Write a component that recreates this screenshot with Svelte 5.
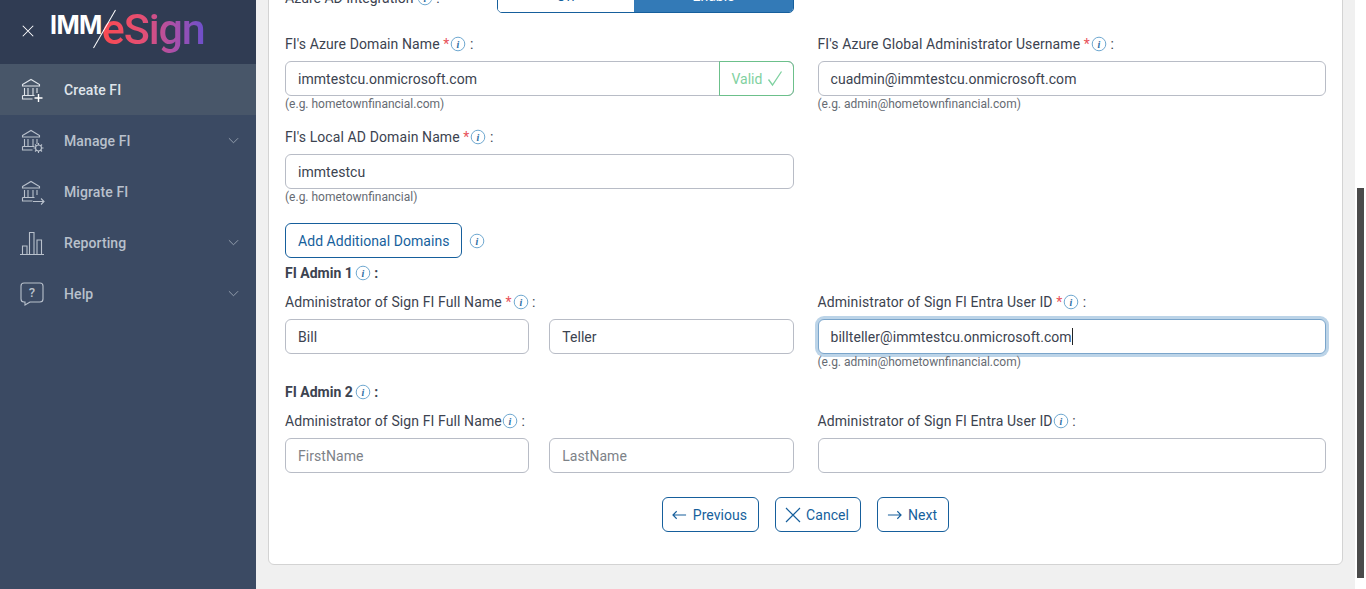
<script lang="ts">
  const nav = [
    { label: 'Create FI', icon: 'plus', active: true },
    { label: 'Manage FI', icon: 'gear', caret: true },
    { label: 'Migrate FI', icon: 'arrow' },
    { label: 'Reporting', icon: 'bars', caret: true },
    { label: 'Help', icon: 'help', caret: true }
  ];
</script>

{#snippet info()}
  <svg class="info" viewBox="0 0 16 16" aria-hidden="true">
    <circle cx="8" cy="8" r="6.8" fill="none" stroke="#6fa8d0" stroke-width="1" />
    <text x="8" y="11.5" text-anchor="middle" class="info-i">i</text>
  </svg>
{/snippet}

{#snippet bank()}
  <path d="M3.500 7.500 12 2.500l8.500 5v1.500h-17zM5.500 11v7M9 11v7M14 11v7M18 11v5M3.500 18.500h12M3.500 18.500v3.500h10" />
{/snippet}

<div class="layout">
  <aside class="sidebar">
    <header class="brand">
      <svg class="close" viewBox="0 0 16 16" aria-hidden="true">
        <path d="M2 2l12 12M14 2 2 14" />
      </svg>
      <div class="logo">
        <span class="imm">IMM</span>
        <span class="slash"></span>
        <span class="esign">eSign</span>
      </div>
    </header>
    <nav>
      {#each nav as item}
        <div class="nav-item" class:active={item.active}>
          <svg class="nav-icon" viewBox="0 0 26 26" aria-hidden="true">
            {#if item.icon === 'bars'}
              <path d="M1 24.500h24M3.500 24v-8h4.500v8M10.500 24V2.500h4.500V24M18 24V10h4.500v14" />
            {:else if item.icon === 'help'}
              <path d="M5 2h16a3 3 0 0 1 3 3v13a3 3 0 0 1-3 3H11l-5 3v-3H5a3 3 0 0 1-3-3V5a3 3 0 0 1 3-3z" />
              <text x="13" y="16" text-anchor="middle" class="help-mark">?</text>
            {:else}
              {@render bank()}
              {#if item.icon === 'plus'}
                <path class="strong" d="M19.500 17v8M15.500 21h8" />
              {:else if item.icon === 'gear'}
                <circle cx="19.500" cy="20" r="3" />
                <path d="M19.500 15v2M19.500 23v2M14.500 20h2M22.500 20h2M16 16.500l1.500 1.500M21.500 22l1.500 1.500M23 16.500 21.500 18M17.500 22 16 23.500" />
              {:else}
                <path d="M14 22.500h11M22 19.500l3 3-3 3" />
              {/if}
            {/if}
          </svg>
          <span class="nav-label">{item.label}</span>
          {#if item.caret}
            <svg class="caret" viewBox="0 0 12 7" aria-hidden="true"><path d="M1 1l5 5 5-5" /></svg>
          {/if}
        </div>
      {/each}
    </nav>
  </aside>

  <main class="main">
    <section class="card">
      <div class="toggle-row">
        <span class="label toggle-label">Azure AD Integration {@render info()} :</span>
        <div class="toggle">
          <span class="off">Off</span>
          <span class="on">Enable</span>
        </div>
      </div>

      <div class="grid first">
        <div class="field">
          <span class="label">FI's Azure Domain Name <b class="req">*</b>{@render info()} :</span>
          <div class="group">
            <span class="group-value">immtestcu.onmicrosoft.com</span>
            <span class="valid">Valid
              <svg viewBox="0 0 16 16" aria-hidden="true"><path d="M1.500 9l4 5.500L14.500 1" /></svg>
            </span>
          </div>
          <small>(e.g. hometownfinancial.com)</small>
        </div>
        <div class="field">
          <span class="label">FI's Azure Global Administrator Username <b class="req">*</b>{@render info()} :</span>
          <div class="input">cuadmin@immtestcu.onmicrosoft.com</div>
          <small>(e.g. admin@hometownfinancial.com)</small>
        </div>
        <div class="field second">
          <span class="label">FI's Local AD Domain Name <b class="req">*</b>{@render info()} :</span>
          <div class="input">immtestcu</div>
          <small>(e.g. hometownfinancial)</small>
        </div>
      </div>

      <div class="add-row">
        <button class="btn add">Add Additional Domains</button>
        {@render info()}
      </div>

      <div class="admin-title">FI Admin 1{@render info()} :</div>
      <div class="grid">
        <div class="field">
          <span class="label">Administrator of Sign FI Full Name <b class="req">*</b>{@render info()} :</span>
          <div class="names">
            <div class="input">Bill</div>
            <div class="input">Teller</div>
          </div>
        </div>
        <div class="field">
          <span class="label">Administrator of Sign FI Entra User ID <b class="req">*</b>{@render info()} :</span>
          <div class="input focused">billteller@immtestcu.onmicrosoft.com<i class="cursor"></i></div>
          <small>(e.g. admin@hometownfinancial.com)</small>
        </div>
      </div>

      <div class="admin-title two">FI Admin 2{@render info()} :</div>
      <div class="grid">
        <div class="field">
          <span class="label">Administrator of Sign FI Full Name{@render info()} :</span>
          <div class="names">
            <div class="input placeholder">FirstName</div>
            <div class="input placeholder">LastName</div>
          </div>
        </div>
        <div class="field">
          <span class="label">Administrator of Sign FI Entra User ID{@render info()} :</span>
          <div class="input"></div>
        </div>
      </div>

      <div class="actions">
        <button class="btn">
          <svg viewBox="0 0 16 10" aria-hidden="true"><path d="M15 5H1M5 1 1 5l4 4" /></svg>
          Previous
        </button>
        <button class="btn">
          <svg class="x" viewBox="0 0 16 16" aria-hidden="true"><path d="M1 1l14 14M15 1 1 15" /></svg>
          Cancel
        </button>
        <button class="btn">
          <svg viewBox="0 0 16 10" aria-hidden="true"><path d="M1 5h14M11 1l4 4-4 4" /></svg>
          Next
        </button>
      </div>
    </section>
  </main>

  <div class="scrollbar"><div class="thumb"></div></div>
</div>

<style>
  :global(body) {
    margin: 0;
    overflow: hidden;
    font-family: Roboto, "Liberation Sans", sans-serif;
  }

  .layout {
    display: flex;
    height: 589px;
    overflow: hidden;
    background: #f0f0f0;
  }

  /* --- Sidebar --- */
  .sidebar {
    width: 256px;
    flex-shrink: 0;
    background: #3b4a63;
  }

  .brand {
    height: 64px;
    background: #303c53;
    display: flex;
    align-items: center;
    padding-left: 21px;
    box-sizing: border-box;
  }

  .close {
    width: 14px;
    height: 14px;
    margin-top: -2px;
    fill: none;
    stroke: #fff;
    stroke-width: 1.2;
  }

  .logo {
    position: relative;
    display: flex;
    align-items: flex-start;
    margin-left: 15px;
    height: 64px;
  }

  .imm {
    color: #fff;
    font: 700 25px/36px Inter, Roboto, sans-serif;
    letter-spacing: -0.6px;
    margin-top: 7px;
  }

  .slash {
    position: absolute;
    left: 54px;
    top: 7px;
    width: 1px;
    height: 44px;
    background: #fff;
    transform: rotate(30deg);
  }

  .esign {
    font: 500 43px/48px Roboto, sans-serif;
    letter-spacing: -1.1px;
    margin-top: 5px;
    padding-bottom: 8px;
    background: linear-gradient(90deg, #fb4a50 0%, #e34f75 40%, #a950aa 70%, #6b50cc 100%);
    -webkit-background-clip: text;
    background-clip: text;
    color: transparent;
  }

  .nav-item {
    height: 51px;
    display: flex;
    align-items: center;
    padding-left: 19px;
    color: #b9c1cc;
    font-size: 14px;
    font-weight: 500;
    letter-spacing: 0.1px;
  }

  .nav-item.active {
    background: #485669;
    color: #dfe4ea;
  }

  .nav-icon {
    width: 26px;
    height: 26px;
    fill: none;
    stroke: currentColor;
    stroke-width: 1.1;
    flex-shrink: 0;
  }

  .help-mark {
    font-size: 13px;
    font-weight: 500;
    fill: currentColor;
    stroke: none;
  }

  .strong {
    stroke: #fff;
    stroke-width: 1.4;
  }

  .nav-label {
    margin-left: 19px;
    flex: 1;
  }

  .caret {
    width: 11px;
    height: 7px;
    margin-right: 17px;
    fill: none;
    stroke: #9aa5b4;
    stroke-width: 1;
  }

  /* --- Main --- */
  .main {
    flex: 1;
    min-width: 0;
    padding: 0 12px;
  }

  .card {
    margin-top: -30px;
    height: 595px;
    box-sizing: border-box;
    background: #fff;
    border: 1px solid #d3d3d3;
    border-radius: 6px;
    padding: 0 16px;
    color: #3c4350;
    font-size: 14px;
  }

  .label {
    display: block;
    line-height: 20px;
    white-space: nowrap;
    color: #3c4350;
    letter-spacing: 0.1px;
  }

  .req {
    color: #e8525a;
    font-weight: 400;
    margin-right: 1px;
  }

  .info {
    width: 16px;
    height: 16px;
    vertical-align: -2.5px;
  }

  .info-i {
    font: italic 700 10px "Liberation Serif", serif;
    fill: #2f6ea3;
  }

  .toggle-row {
    display: flex;
    height: 42px;
    align-items: flex-end;
  }

  .toggle-label {
    width: 212px;
    padding-bottom: 5px;
    letter-spacing: 0;
  }

  .toggle {
    width: 297px;
    height: 34px;
    box-sizing: border-box;
    display: flex;
    border: 1px solid #165f9c;
    border-radius: 5px;
    overflow: hidden;
    text-align: center;
    line-height: 32px;
    color: #165f9c;
  }

  .off {
    width: 136px;
    background: #fff;
  }

  .on {
    flex: 1;
    background: #337ab7;
    color: #fff;
  }

  .grid {
    display: grid;
    grid-template-columns: 1fr 1fr;
    column-gap: 24px;
  }

  .grid.first {
    margin-top: 21px;
  }

  .field {
    min-width: 0;
  }

  .second {
    margin-top: 15px;
  }

  .input,
  .group {
    height: 35px;
    margin-top: 7px;
    box-sizing: border-box;
    border: 1px solid #b8bcc6;
    border-radius: 6px;
    background: #fff;
    color: #3c4350;
    line-height: 34px;
    letter-spacing: 0.05px;
  }

  .input {
    padding: 0 12px;
  }

  .group {
    display: flex;
  }

  .group-value {
    flex: 1;
    padding-left: 12px;
  }

  .valid {
    width: 75px;
    box-sizing: border-box;
    margin: -1px;
    padding-left: 12px;
    border: 1px solid #6cc08b;
    border-radius: 0 6px 6px 0;
    color: #7fd1a0;
    letter-spacing: 0;
    display: flex;
    align-items: center;
    gap: 5px;
  }

  .valid svg {
    width: 16px;
    height: 17px;
    fill: none;
    stroke: #7fd1a0;
    stroke-width: 1.3;
  }

  .placeholder {
    color: #7d8288;
  }

  .focused {
    border-color: #7aa5cb;
    box-shadow: 0 0 0 3px #bcd4e8;
    display: flex;
    align-items: center;
  }

  .cursor {
    width: 1px;
    height: 17px;
    background: #222;
  }

  small {
    display: block;
    font-size: 12px;
    line-height: 16px;
    color: #666b73;
  }

  .names {
    display: grid;
    grid-template-columns: 1fr 1fr;
    column-gap: 20px;
  }

  .add-row {
    display: flex;
    align-items: center;
    gap: 7px;
    margin-top: 18px;
  }

  .btn {
    height: 35px;
    padding: 0 11px 0 9px;
    box-sizing: border-box;
    border: 1px solid #165f9c;
    border-radius: 6px;
    background: #fff;
    color: #165f9c;
    font: 14px Roboto, sans-serif;
    letter-spacing: 0.05px;
    display: inline-flex;
    align-items: center;
    gap: 6px;
  }

  .btn svg {
    width: 15px;
    height: 10px;
    fill: none;
    stroke: #165f9c;
    stroke-width: 1.2;
  }

  .btn svg.x {
    width: 16px;
    height: 16px;
    margin-right: -1px;
  }

  .btn.add {
    padding: 0 12px;
  }

  .admin-title {
    font-weight: 700;
    line-height: 20px;
    margin-top: 5px;
    margin-bottom: 9px;
    letter-spacing: 0;
  }

  .admin-title .info {
    margin-left: 2px;
  }

  .admin-title.two {
    margin-top: 12px;
  }

  .actions {
    display: flex;
    justify-content: center;
    gap: 16px;
    margin-top: 24px;
  }

  .scrollbar {
    width: 11px;
    flex-shrink: 0;
    background: #fff;
    padding: 188px 2px 11px;
    box-sizing: border-box;
  }

  .thumb {
    height: 100%;
    background: #4a4a4a;
  }
</style>
